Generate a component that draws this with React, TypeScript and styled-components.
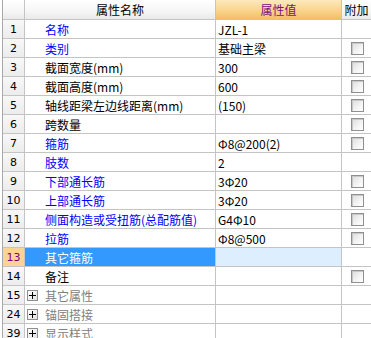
import styled, { createGlobalStyle } from 'styled-components'

const GlobalStyle = createGlobalStyle`
  html, body {
    margin: 0;
    padding: 0;
    background: #ffffff;
  }
  body {
    font-family: "Noto Sans CJK SC", "DejaVu Sans", sans-serif;
    font-size: 12px;
    color: #000000;
  }
`

type Row = {
  no: number
  name: string
  value?: string
  blue?: boolean
  check?: boolean
  selected?: boolean
  group?: boolean
}

const rows: Row[] = [
  { no: 1, name: '名称', value: 'JZL-1', blue: true },
  { no: 2, name: '类别', value: '基础主梁', blue: true, check: true },
  { no: 3, name: '截面宽度(mm)', value: '300', check: true },
  { no: 4, name: '截面高度(mm)', value: '600', check: true },
  { no: 5, name: '轴线距梁左边线距离(mm)', value: '(150)', check: true },
  { no: 6, name: '跨数量', check: true },
  { no: 7, name: '箍筋', value: 'Φ8@200(2)', blue: true, check: true },
  { no: 8, name: '肢数', value: '2', blue: true },
  { no: 9, name: '下部通长筋', value: '3Φ20', blue: true, check: true },
  { no: 10, name: '上部通长筋', value: '3Φ20', blue: true, check: true },
  { no: 11, name: '侧面构造或受扭筋(总配筋值)', value: 'G4Φ10', blue: true, check: true },
  { no: 12, name: '拉筋', value: 'Φ8@500', blue: true, check: true },
  { no: 13, name: '其它箍筋', selected: true },
  { no: 14, name: '备注', check: true },
  { no: 15, name: '其它属性', group: true },
  { no: 24, name: '锚固搭接', group: true },
  { no: 39, name: '显示样式', group: true },
]

// the grid is cut by the window at the bottom, like the screenshot
const Frame = styled.div`
  width: 369px;
  margin-left: 2px;
  border-left: 1px solid #a8a8a8;
  height: 338px;
  overflow: hidden;
  box-sizing: border-box;
`

const Grid = styled.div`
  display: grid;
  grid-template-columns: 22px 191px 126px 29px;
  grid-auto-rows: 19px;
  grid-template-rows: 20px;
`

const HeadCell = styled.div<{ $accent?: boolean; $last?: boolean }>`
  display: flex;
  align-items: center;
  justify-content: center;
  box-sizing: border-box;
  border-right: ${(p) => (p.$last ? 'none' : '1px solid #c4c4c4')};
  border-bottom: 1px solid #c4c4c4;
  background: ${(p) =>
    p.$accent
      ? 'linear-gradient(to bottom, #fde9bd 0%, #f9d48d 55%, #f2bf66 100%)'
      : 'linear-gradient(to bottom, #ffffff 0%, #f6f6f6 60%, #e9e9e9 100%)'};
  color: ${(p) => (p.$accent ? '#7a0f86' : '#000000')};
  font-size: 12px;
  white-space: nowrap;
  overflow: hidden;
`

const IndexCell = styled.div<{ $selected?: boolean }>`
  display: flex;
  align-items: center;
  justify-content: center;
  box-sizing: border-box;
  border-right: 1px solid #c4c4c4;
  border-bottom: 1px solid #c4c4c4;
  background: ${(p) => (p.$selected ? '#fdd395' : 'linear-gradient(to bottom, #f8f8f8, #ececec)')};
  color: ${(p) => (p.$selected ? '#800080' : '#000000')};
  font-family: "DejaVu Sans", sans-serif;
  font-size: 11px;
`

const NameCell = styled.div<{ $blue?: boolean; $selected?: boolean; $group?: boolean }>`
  display: flex;
  align-items: center;
  box-sizing: border-box;
  padding-left: ${(p) => (p.$group ? '2px' : '20px')};
  border-right: 1px solid #c4c4c4;
  border-bottom: 1px solid #c4c4c4;
  background: ${(p) => (p.$selected ? '#3399ff' : '#ffffff')};
  color: ${(p) => (p.$selected ? '#ffffff' : p.$group ? '#808080' : p.$blue ? '#0000ff' : '#000000')};
  white-space: nowrap;
  overflow: hidden;
  gap: 7px;
`

const ValueCell = styled.div<{ $selected?: boolean }>`
  display: flex;
  align-items: center;
  box-sizing: border-box;
  padding-left: 2px;
  border-right: 1px solid #c4c4c4;
  border-bottom: 1px solid #c4c4c4;
  background: ${(p) => (p.$selected ? '#ddeeff' : '#ffffff')};
  white-space: nowrap;
  overflow: hidden;
`

const ExtraCell = styled.div`
  display: flex;
  align-items: center;
  justify-content: center;
  box-sizing: border-box;
  padding-left: 2px;
  border-bottom: 1px solid #c4c4c4;
  background: #ffffff;
`

const CheckBox = styled.span`
  width: 13px;
  height: 13px;
  box-sizing: border-box;
  border: 1px solid #8f8f8f;
  background: linear-gradient(135deg, #dcdcdc 0%, #f4f4f4 60%, #ffffff 100%);
  box-shadow: inset 1px 1px 0 #c8c8c8;
`

const Expander = styled.span`
  width: 11px;
  height: 11px;
  box-sizing: border-box;
  border: 1px solid #8f8f8f;
  background: linear-gradient(135deg, #ffffff, #e2e2e2);
  display: flex;
  align-items: center;
  justify-content: center;
  flex-shrink: 0;
`

const PlusIcon = () => (
  <svg width="7" height="7" viewBox="0 0 7 7">
    <rect x="0" y="3" width="7" height="1" fill="#000" />
    <rect x="3" y="0" width="1" height="7" fill="#000" />
  </svg>
)

const Line = ({ row }: { row: Row }) => (
  <>
    <IndexCell $selected={row.selected}>{row.no}</IndexCell>
    <NameCell $blue={row.blue} $selected={row.selected} $group={row.group}>
      {row.group && (
        <Expander>
          <PlusIcon />
        </Expander>
      )}
      {row.name}
    </NameCell>
    <ValueCell $selected={row.selected}>{row.value}</ValueCell>
    <ExtraCell>{row.check && <CheckBox />}</ExtraCell>
  </>
)

export default function App() {
  return (
    <>
      <GlobalStyle />
      <Frame>
        <Grid>
          <HeadCell />
          <HeadCell>属性名称</HeadCell>
          <HeadCell $accent>属性值</HeadCell>
          <HeadCell $last>附加</HeadCell>
          {rows.map((r) => (
            <Line key={r.no} row={r} />
          ))}
        </Grid>
      </Frame>
    </>
  )
}
